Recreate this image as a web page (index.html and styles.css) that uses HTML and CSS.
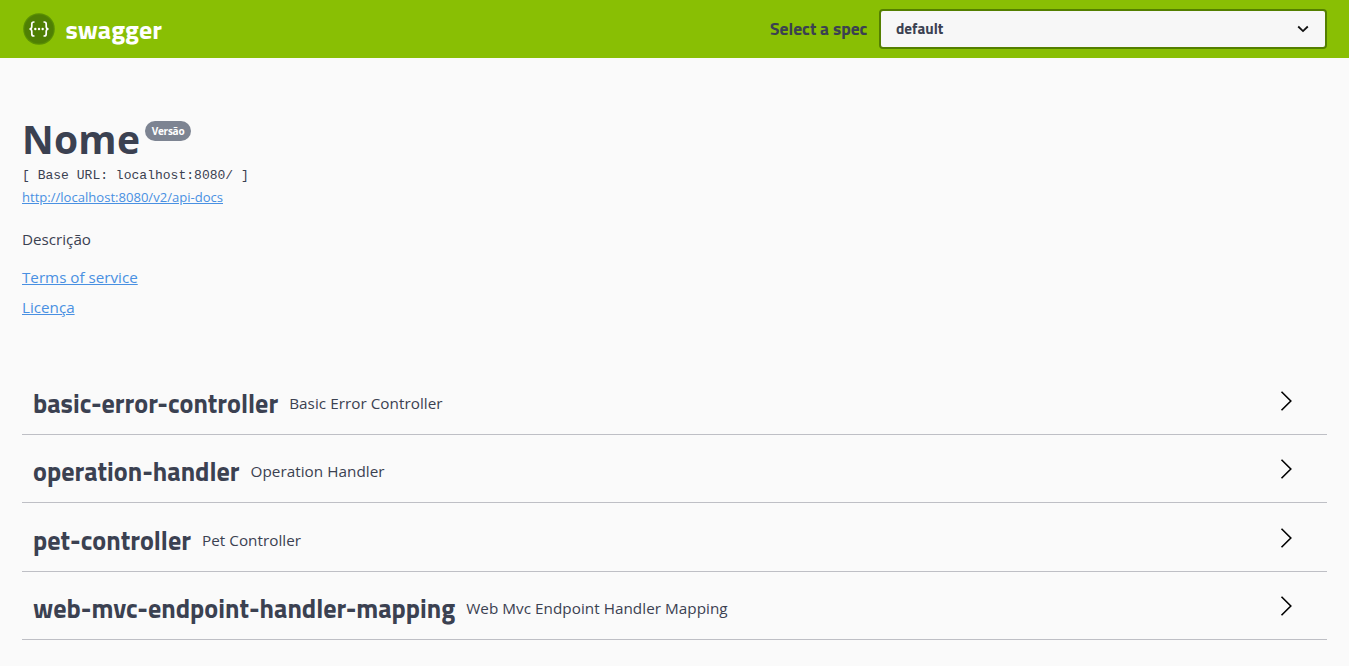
FILE: index.html
```html
<!DOCTYPE html>
<html lang="pt">
<head>
<meta charset="utf-8">
<title>Swagger UI</title>
<link rel="stylesheet" href="styles.css">
</head>
<body>
<header class="topbar">
  <a class="brand">
    <svg class="logo" viewBox="0 0 32 32"><circle cx="16" cy="16" r="15.800" fill="#5a9004"/><circle cx="16" cy="16" r="14.600" fill="#4f7f04"/><g fill="none" stroke="#fff" stroke-width="1.700"><path d="M11.500 9h-.7Q8.800 9 8.800 11v2.500q0 2.300-2.300 2.500q2.300.2 2.300 2.500v2.500q0 2 2 2h.7M20.500 9h.7q2 0 2 2v2.500q0 2.300 2.300 2.500q-2.300.2-2.300 2.500v2.500q0 2-2 2h-.7"/></g><g fill="#fff"><circle cx="12.300" cy="16" r="1.200"/><circle cx="16" cy="16" r="1.200"/><circle cx="19.700" cy="16" r="1.200"/></g></svg>
    <span class="wordmark">swagger</span>
  </a>
  <div class="picker">
    <span class="picker-label">Select a spec</span>
    <div class="select">
      <span class="select-value">default</span>
      <svg class="caret" viewBox="0 0 12 8"><path d="M1.200 1.500L6 6.100l4.800-4.600"/></svg>
    </div>
  </div>
</header>
<main class="content">
  <section class="info">
    <h1 class="title"><span class="title-text">Nome</span><span class="version">Versão</span></h1>
    <pre class="base-url">[ Base URL: localhost:8080/ ]</pre>
    <a class="link docs">http://localhost:8080/v2/api-docs</a>
    <p class="description">Descrição</p>
    <a class="link terms">Terms of service</a>
    <a class="link license">Licença</a>
  </section>
  <section class="tags">
    <div class="tag">
      <h2 class="tag-name">basic-error-controller</h2>
      <span class="tag-desc">Basic Error Controller</span>
      <svg class="arrow" viewBox="0 0 12 20"><path d="M1.500 .8L10.800 10L1.500 19.200"/></svg>
    </div>
    <div class="tag">
      <h2 class="tag-name">operation-handler</h2>
      <span class="tag-desc">Operation Handler</span>
      <svg class="arrow" viewBox="0 0 12 20"><path d="M1.500 .8L10.800 10L1.500 19.200"/></svg>
    </div>
    <div class="tag">
      <h2 class="tag-name">pet-controller</h2>
      <span class="tag-desc">Pet Controller</span>
      <svg class="arrow" viewBox="0 0 12 20"><path d="M1.500 .8L10.800 10L1.500 19.200"/></svg>
    </div>
    <div class="tag">
      <h2 class="tag-name">web-mvc-endpoint-handler-mapping</h2>
      <span class="tag-desc">Web Mvc Endpoint Handler Mapping</span>
      <svg class="arrow" viewBox="0 0 12 20"><path d="M1.500 .8L10.800 10L1.500 19.200"/></svg>
    </div>
  </section>
</main>
</body>
</html>
```
FILE: styles.css
```css
* { box-sizing: border-box; }
body { margin: 0; background: #fafafa; color: #3b4151; font-family: "Open Sans", sans-serif; }

.topbar { display: flex; align-items: center; justify-content: space-between; height: 58px; padding: 0 22px; background: #89bf04; font-family: "Titillium Web", Roboto, sans-serif; font-weight: 700; }
.brand { display: flex; align-items: center; gap: 10.500px; padding-left: 1px; color: #fff; }
.logo { width: 32px; height: 32px; }
.wordmark { padding-top: 2px; font-size: 26px; line-height: 30px; }
.picker { display: flex; align-items: center; gap: 11px; }
.picker-label { width: 98px; font-size: 17.500px; line-height: 26px; white-space: nowrap; }
.select { display: flex; align-items: center; justify-content: space-between; width: 448px; height: 40px; padding: 0 16px 0 15px; border: 2px solid #547f00; border-radius: 4px; background: #f7f7f7; }
.select-value { font-size: 15.200px; line-height: 22px; }
.caret { width: 12px; height: 8px; fill: none; stroke: #111; stroke-width: 1.800; }

.content { padding: 61px 22px 0; }
.info { display: flex; flex-direction: column; align-items: flex-start; height: 247.700px; }
.title { display: flex; align-items: flex-start; gap: 5px; height: 47px; margin: 0; }
.title-text { font-size: 39px; line-height: 39px; letter-spacing: .25px; }
.version { height: 20px; margin-top: 2px; padding: 0 6.500px; border-radius: 10px; background: #7d8492; color: #fff; font-size: 10px; line-height: 20px; letter-spacing: -.25px; }
.base-url { margin: 0; font: 13px/20px "Liberation Mono", monospace; letter-spacing: .02px; }
.link { color: #4990e2; text-decoration: underline; }
.docs { margin-top: 2px; font-size: 13.070px; line-height: 18px; }
.description { margin: 22px 0 0; font-size: 15.200px; line-height: 22px; }
.terms { margin-top: 16px; font-size: 15.200px; line-height: 22px; }
.license { margin-top: 8px; font-size: 15.200px; line-height: 22px; }

.tag { display: flex; align-items: center; height: 68.330px; padding: 5.600px 35px 0 11px; border-bottom: 1px solid #bebfc5; }
.tag-name { margin: 0; font-family: "Titillium Web", Roboto, sans-serif; font-size: 26.150px; line-height: 36px; white-space: nowrap; }
.tag-desc { flex: 1; padding-left: 11px; font-size: 15.250px; line-height: 22px; letter-spacing: .04px; }
.arrow { width: 12px; height: 20px; margin-top: -4.500px; fill: none; stroke: #000; stroke-width: 1.600; }
```
